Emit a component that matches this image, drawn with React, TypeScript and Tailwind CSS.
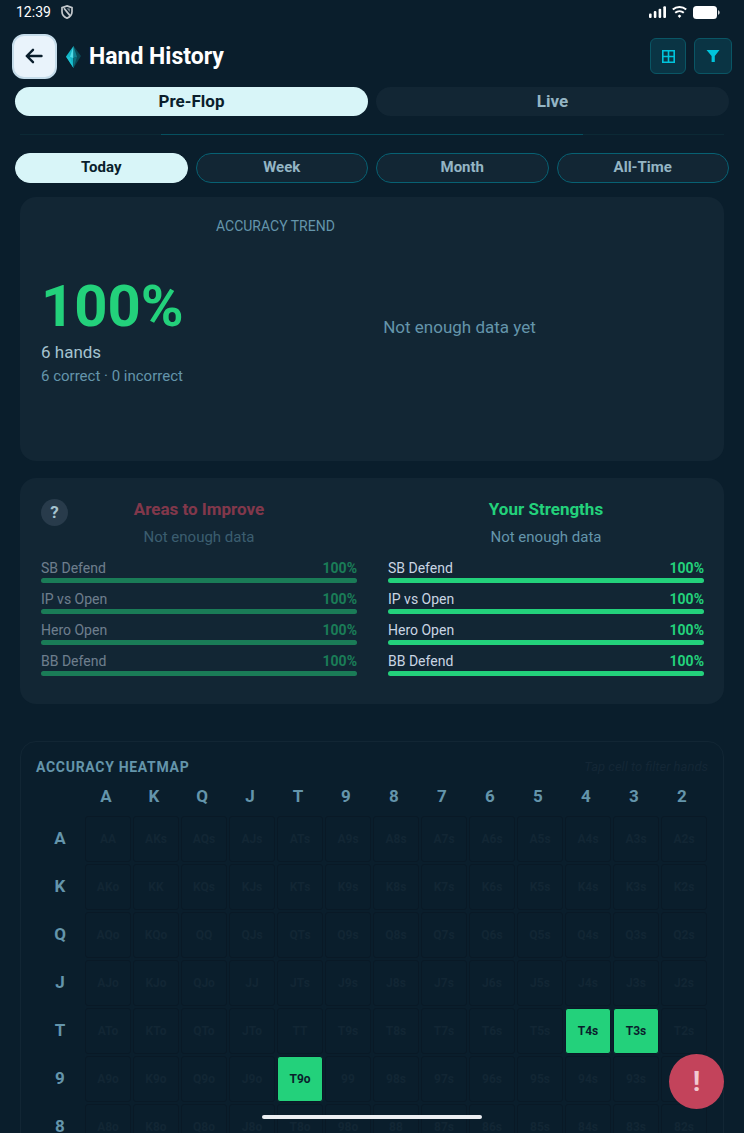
import { useState } from "react";
import clsx from "clsx";

const RANKS = ["A", "K", "Q", "J", "T", "9", "8", "7", "6", "5", "4", "3", "2"];
const VISIBLE_ROWS = RANKS.slice(0, 7);
const MODES = ["Pre-Flop", "Live"];
const RANGES = ["Today", "Week", "Month", "All-Time"];
const PLAYED = ["T4s", "T3s", "T9o"];

const SPOTS = [
  { name: "SB Defend", accuracy: 100 },
  { name: "IP vs Open", accuracy: 100 },
  { name: "Hero Open", accuracy: 100 },
  { name: "BB Defend", accuracy: 100 },
];

function handName(row: number, col: number) {
  if (row === col) return RANKS[row] + RANKS[row];
  if (row < col) return RANKS[row] + RANKS[col] + "s";
  return RANKS[col] + RANKS[row] + "o";
}

function StatusBar() {
  return (
    <div className="flex h-6 items-center justify-between pl-4 pr-6 text-white">
      <div className="flex items-center gap-2.5">
        <span className="text-sm">12:39</span>
        <svg width="12" height="14" viewBox="0 0 12 14" fill="none">
          <path
            d="M6 .9 11 2.6v4.2c0 3-2 5.2-5 6.4-3-1.2-5-3.4-5-6.4V2.6z"
            stroke="#c3c8cc"
            strokeWidth="1.7"
          />
          <path d="M3 3.2 9 10.6" stroke="#c3c8cc" strokeWidth="1.8" />
          <path d="M5.6 3.2 8.8 7V3.4z" fill="#7f8a93" />
        </svg>
      </div>
      <div className="flex items-center gap-1.5">
        <svg width="17" height="12" viewBox="0 0 17 12" fill="#fff">
          <rect x="0" y="7.5" width="2.6" height="4.5" rx="1" />
          <rect x="4.8" y="5" width="2.6" height="7" rx="1" />
          <rect x="9.6" y="2.8" width="2.6" height="9.2" rx="1" />
          <rect x="14.3" y="0.3" width="2.7" height="11.7" rx="1" />
        </svg>
        <svg width="15" height="12" viewBox="0 0 15 12" fill="none" stroke="#fff">
          <path d="M.8 3.6C4.6.2 10.4.2 14.2 3.6" strokeWidth="2" />
          <path d="M3.2 6.7c2.5-2.1 6.1-2.1 8.6 0" strokeWidth="2" />
          <path d="M7.5 8.4 9.3 10.1 7.5 12 5.7 10.1z" fill="#fff" stroke="none" />
        </svg>
        <svg width="27" height="13" viewBox="0 0 27 13" fill="#fff">
          <rect width="24" height="13" rx="3.5" />
          <path d="M25.2 4.2c1.8.4 1.8 4.2 0 4.6z" />
        </svg>
      </div>
    </div>
  );
}

function Diamond() {
  return (
    <svg width="15" height="22" viewBox="0 0 15 22">
      <path d="M7.5 0 0 10.5 7.5 22z" fill="#12b5c6" />
      <path d="M7.5 0v22l7.5-12z" fill="#0a4753" />
      <path d="M7.5 0 4 11l3.5 1z" fill="#4fdbe7" />
      <path d="M0 10.5 4 11l3.5 11z" fill="#1fc3d3" />
      <path d="M7.5 0v12l3.5-1z" fill="#0d8191" />
      <path d="M7.5 12v10L11 11z" fill="#0a6b79" />
    </svg>
  );
}

function Header() {
  return (
    <header className="flex items-center px-3 pt-2.5">
      <button
        aria-label="Back"
        className="flex size-[45px] items-center justify-center rounded-xl border-2 border-[#c5dcea] bg-[#e9f3fb] pr-px pb-px"
      >
        <svg width="18" height="16" viewBox="0 0 18 16" fill="none" stroke="#0a1e2c" strokeWidth="2.4" strokeLinecap="round" strokeLinejoin="round">
          <path d="M16.5 8H1.8M8 1.8 1.8 8 8 14.2" />
        </svg>
      </button>
      <div className="ml-[9px] flex flex-1 items-center gap-2">
        <Diamond />
        <h1 className="text-[23px] leading-8 font-bold text-white">Hand History</h1>
      </div>
      <div className="flex gap-2 self-start pt-1">
        <button
          aria-label="Grid view"
          className="flex size-9 items-center justify-center rounded-md border border-[#0a5665] bg-[#0a3444]"
        >
          <svg width="13" height="13" viewBox="0 0 13 13" fill="none" stroke="#00c4dc" strokeWidth="1.6">
            <path d="M.8.8h11.4v11.4H.8zM6.5.8v11.4M.8 6.5h11.4" />
          </svg>
        </button>
        <button
          aria-label="Filter"
          className="flex h-9 w-[38px] items-center justify-center rounded-md border border-[#0a5665] bg-[#0a3444]"
        >
          <svg width="14" height="12" viewBox="0 0 14 12" fill="#00c4dc">
            <path d="M.5 0h13L8.8 6v6H5.6V6z" />
          </svg>
        </button>
      </div>
    </header>
  );
}

function TrendCard() {
  return (
    <section className="mx-5 mt-3.5 flex min-h-[264px] gap-[30px] rounded-2xl bg-[#122634] p-[21px]">
      <div className="flex w-[145px] flex-col justify-center pt-0.5 whitespace-nowrap">
        <p className="text-[58px] leading-[68px] font-bold text-[#23d17b]">100%</p>
        <p className="text-[17px] leading-6 text-[#a5c3cf]">6 hands</p>
        <p className="text-[15px] leading-6 text-[#6495ab]">6 correct · 0 incorrect</p>
      </div>
      <div className="flex-1">
        <h2 className="text-sm leading-4 text-[#6495ab]">ACCURACY TREND</h2>
        <div className="flex h-[188px] items-center justify-center text-[17px] text-[#6495ab]">
          Not enough data yet
        </div>
      </div>
    </section>
  );
}

interface SpotColumnProps {
  title: string;
  titleClass: string;
  className?: string;
}

function SpotColumn({ title, titleClass, className }: SpotColumnProps) {
  return (
    <div className={clsx("flex-1", className)}>
      <h2 className={clsx("text-center text-[17px] leading-[22px] font-bold", titleClass)}>{title}</h2>
      <p className="mt-[7px] text-center text-[15px] leading-5 text-[#6495ab]">Not enough data</p>
      <ul className="mt-[13px] flex flex-col gap-2">
        {SPOTS.map((spot) => (
          <li key={spot.name}>
            <div className="flex justify-between pb-px text-sm leading-[17px]">
              <span className="text-[#c9d5e3]">{spot.name}</span>
              <span className="font-bold text-[#23d17b]">{spot.accuracy}%</span>
            </div>
            <div className="h-[5px] rounded-full bg-[#1f3444]">
              <div className="h-full rounded-full bg-[#23d17b]" style={{ width: `${spot.accuracy}%` }} />
            </div>
          </li>
        ))}
      </ul>
    </div>
  );
}

function SpotsCard() {
  return (
    <section className="relative mx-5 mt-[17px] flex gap-[31px] rounded-2xl bg-[#122634] pt-5 pr-5 pb-7 pl-[21px]">
      <SpotColumn title="Areas to Improve" titleClass="text-[#f04a63]" className="opacity-50" />
      <SpotColumn title="Your Strengths" titleClass="text-[#23d17b]" />
      <button
        aria-label="Help"
        className="absolute top-[21px] left-[21px] size-[27px] rounded-full bg-[#283b4b] text-[17px] leading-[27px] font-bold text-[#a5c3cf]"
      >
        ?
      </button>
    </section>
  );
}

function Heatmap() {
  return (
    <section className="mx-5 mt-[37px] rounded-2xl border border-[#122634] p-[15px]">
      <div className="flex items-center justify-between leading-5">
        <h2 className="text-sm leading-5 font-bold tracking-wider text-[#6495ab]">ACCURACY HEATMAP</h2>
        <span className="text-[13px] text-[#142736] italic">Tap cell to filter hands</span>
      </div>
      <table className="mt-0.5 w-full table-fixed border-collapse">
        <thead>
          <tr className="h-9 text-[17px] text-[#6495ab]">
            <td />
            {RANKS.map((rank) => (
              <th key={rank} scope="col" className="p-0 pr-1">{rank}</th>
            ))}
          </tr>
        </thead>
        <tbody>
          {VISIBLE_ROWS.map((rank, row) => (
            <tr key={rank}>
              <th scope="row" className="p-0 text-[17px] text-[#6495ab]">{rank}</th>
              {RANKS.map((_, col) => {
                const hand = handName(row, col);
                return (
                  <td key={hand} className="p-px">
                    <button
                      className={clsx(
                        "block h-[46px] w-full rounded-[3px] border border-[#091926] text-xs font-bold",
                        PLAYED.includes(hand) ? "bg-[#23d17b] text-[#0a1e2c]" : "text-[#122634]"
                      )}
                    >
                      {hand}
                    </button>
                  </td>
                );
              })}
            </tr>
          ))}
        </tbody>
      </table>
    </section>
  );
}

export default function App() {
  const [mode, setMode] = useState("Pre-Flop");
  const [range, setRange] = useState("Today");

  return (
    <div className="relative h-screen overflow-hidden bg-[#0a1e2c] font-[Roboto,sans-serif]">
      <StatusBar />
      <Header />

      <div className="mt-2 flex gap-2 px-[15px]">
        {MODES.map((item) => (
          <button
            key={item}
            onClick={() => setMode(item)}
            className={clsx(
              "h-[29px] flex-1 rounded-full text-[17px] leading-[29px] font-bold",
              mode === item ? "bg-[#d8f5f8] text-[#0a1e2c]" : "bg-[#122634] text-[#94b5c4]"
            )}
          >
            {item}
          </button>
        ))}
      </div>

      <div className="mx-5 my-[18px] flex h-px bg-[#0c2935]">
        <div className="mx-auto w-3/5 bg-[#06505f]" />
      </div>

      <div className="flex gap-2 px-[15px]">
        {RANGES.map((item) => (
          <button
            key={item}
            onClick={() => setRange(item)}
            className={clsx(
              "h-[30px] flex-1 rounded-full border pb-0.5 text-[15px] leading-[26px] font-bold",
              range === item
                ? "border-[#d8f5f8] bg-[#d8f5f8] text-[#0a1e2c]"
                : "border-[#076173] bg-[#122634] text-[#94b5c4]"
            )}
          >
            {item}
          </button>
        ))}
      </div>

      <TrendCard />
      <SpotsCard />
      <Heatmap />

      <button
        aria-label="Report a problem"
        className="absolute right-5 bottom-6 size-[55px] rounded-full bg-[#c3435b] text-[28px] font-bold text-[#f2c9d1]"
      >
        !
      </button>
      <div className="absolute bottom-3.5 left-1/2 h-1 w-[220px] -translate-x-1/2 rounded-full bg-[#ebeef2]" />
    </div>
  );
}
